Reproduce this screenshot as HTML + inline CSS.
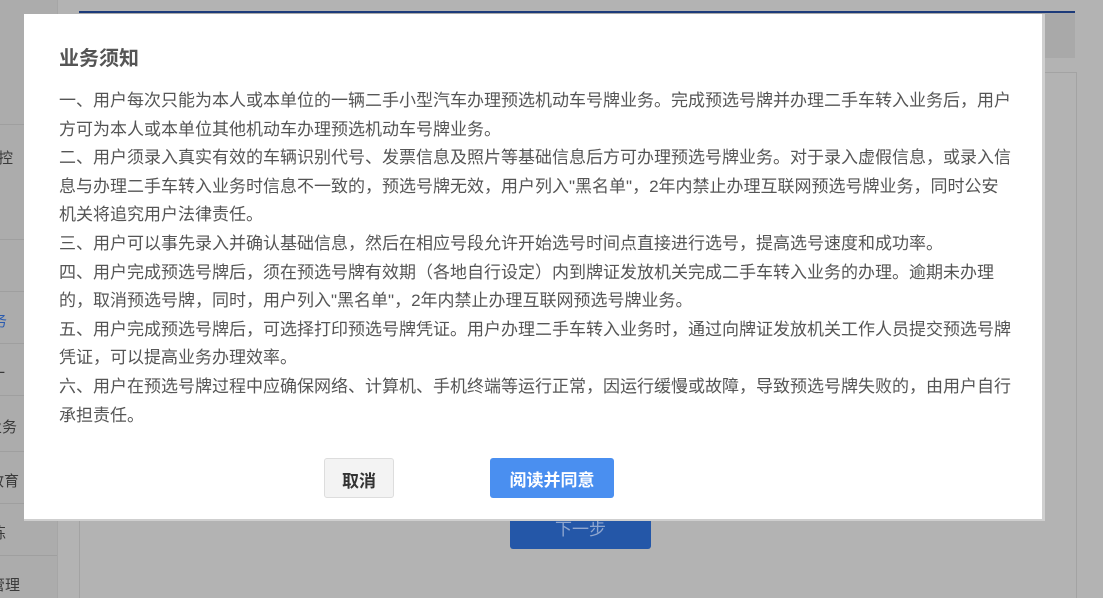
<!DOCTYPE html>
<html><head><meta charset="utf-8">
<style>
html,body{margin:0;padding:0;width:1103px;height:598px;overflow:hidden;background:#b3b3b3;font-family:"Liberation Sans","Noto Sans CJK SC",sans-serif;position:relative;}
.side{position:absolute;left:0;top:0;width:57px;height:598px;background:#acacac;border-right:1px solid #a6a6a6;overflow:hidden;}
.side div{position:absolute;left:0;width:57px;border-top:1px solid #9f9f9f;font-size:15px;color:#3a3a3a;}
.topline{position:absolute;left:79px;top:11px;width:996px;height:2px;background:#1d3b7a;}
.topbar{position:absolute;left:79px;top:13px;width:996px;height:45px;background:#a9a9a9;}
.main{position:absolute;left:79px;top:72px;width:996px;height:526px;border-left:1px solid #a3a3a3;border-right:1px solid #a3a3a3;border-top:1px solid #a3a3a3;background:#b3b3b3;}
.nextbtn{position:absolute;left:510px;top:500px;width:141px;height:49px;background:#2457a8;border-radius:3px;color:#8fa6cf;font-size:17px;text-align:center;line-height:60px;}
.modal{position:absolute;left:24px;top:14px;width:1018px;height:505px;background:#fff;border-right:3px solid #cfcfcf;border-bottom:2px solid #cfcfcf;}
.title{position:absolute;left:35px;top:28px;font-size:20px;font-weight:bold;color:#555;}
.body{position:absolute;left:35px;top:73px;font-size:17px;line-height:28.6px;color:#555;white-space:nowrap;}
.btn{position:absolute;top:444px;height:38px;border-radius:3px;font-size:17px;font-weight:bold;text-align:center;line-height:46px;}
.cancel{left:300px;width:68px;background:#f3f3f3;border:1px solid #ddd;color:#333;}
.ok{left:466px;width:124px;height:40px;background:#4a8ff0;color:#fff;}
</style></head><body>
<div class="side">
<div style="top:124px;height:115px;"><span style="position:absolute;left:-2px;top:22px">控</span></div>
<div style="top:239px;height:52px;"></div>
<div style="top:291px;height:52px;color:#2a5bb0"><span style="position:absolute;left:-8px;top:18px">务</span></div>
<div style="top:343px;height:52px;"><span style="position:absolute;left:-10px;top:18px">一</span></div>
<div style="top:395px;height:52px;"><span style="position:absolute;left:-13px;top:20px">业务</span></div>
<div style="top:451px;height:52px;"><span style="position:absolute;left:-11px;top:18px">教育</span></div>
<div style="top:503px;height:52px;"><span style="position:absolute;left:-9px;top:18px">练</span></div>
<div style="top:555px;height:52px;"><span style="position:absolute;left:-10px;top:18px">管理</span></div>
</div>
<div class="topline"></div>
<div class="topbar"></div>
<div class="main"></div>
<div class="nextbtn">下一步</div>
<div class="modal">
<div class="title">业务须知</div>
<div class="body">一、用户每次只能为本人或本单位的一辆二手小型汽车办理预选机动车号牌业务。完成预选号牌并办理二手车转入业务后，用户<br>方可为本人或本单位其他机动车办理预选机动车号牌业务。<br>二、用户须录入真实有效的车辆识别代号、发票信息及照片等基础信息后方可办理预选号牌业务。对于录入虚假信息，或录入信<br>息与办理二手车转入业务时信息不一致的，预选号牌无效，用户列入"黑名单"，2年内禁止办理互联网预选号牌业务，同时公安<br>机关将追究用户法律责任。<br>三、用户可以事先录入并确认基础信息，然后在相应号段允许开始选号时间点直接进行选号，提高选号速度和成功率。<br>四、用户完成预选号牌后，须在预选号牌有效期（各地自行设定）内到牌证发放机关完成二手车转入业务的办理。逾期未办理<br>的，取消预选号牌，同时，用户列入"黑名单"，2年内禁止办理互联网预选号牌业务。<br>五、用户完成预选号牌后，可选择打印预选号牌凭证。用户办理二手车转入业务时，通过向牌证发放机关工作人员提交预选号牌<br>凭证，可以提高业务办理效率。<br>六、用户在预选号牌过程中应确保网络、计算机、手机终端等运行正常，因运行缓慢或故障，导致预选号牌失败的，由用户自行<br>承担责任。</div>
<div class="btn cancel">取消</div>
<div class="btn ok">阅读并同意</div>
</div>
</body></html>
